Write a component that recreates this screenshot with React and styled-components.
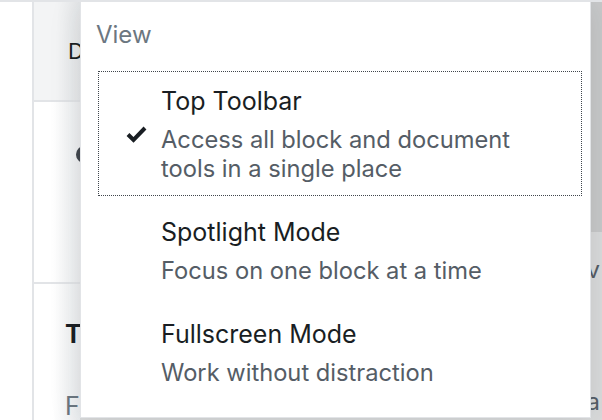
import React from "react";
import styled, { createGlobalStyle } from "styled-components";

const GlobalStyle = createGlobalStyle`
  html, body {
    margin: 0;
    padding: 0;
    background: #fff;
  }
  body {
    font-family: Inter, "Noto Sans", "Liberation Sans", sans-serif;
    -webkit-font-smoothing: antialiased;
  }
`;

const Screen = styled.div`
  position: relative;
  width: 602px;
  height: 420px;
  overflow: hidden;
  display: flex;
  box-sizing: border-box;
  border-top: 2px solid #e2e4e7;
`;

const Gutter = styled.div`
  width: 32px;
  flex-shrink: 0;
  border-right: 2px solid #e2e4e7;
`;

const Sidebar = styled.div`
  width: 46px;
  flex-shrink: 0;
  overflow: hidden;
  white-space: nowrap;
  display: flex;
  flex-direction: column;
  background: linear-gradient(90deg, #fff 40%, #eceef0 100%);
`;

const SidebarHeader = styled.div`
  height: 98px;
  display: flex;
  align-items: center;
  padding-left: 34px;
  background: linear-gradient(90deg, #f3f4f5 50%, #e6e8ea 100%);
  border-bottom: 2px solid #e2e4e7;
  font-size: 22px;
  color: #191e23;
`;

const SidebarBody = styled.div`
  height: 182px;
  display: flex;
  align-items: flex-start;
  padding: 44px 0 0 42px;
  box-sizing: border-box;
  border-bottom: 2px solid #e2e4e7;
`;

const Dot = styled.span`
  flex-shrink: 0;
  width: 17px;
  height: 17px;
  border-radius: 50%;
  background: #40464d;
`;

const SidebarSection = styled.div`
  flex: 1;
  display: flex;
  flex-direction: column;
  padding: 36px 0 0 31px;
  gap: 44px;
`;

const SectionTitle = styled.div`
  font-size: 25px;
  line-height: 28px;
  font-weight: 700;
  color: #191e23;
`;

const SectionText = styled.div`
  font-size: 25px;
  line-height: 28px;
  color: #6c7781;
`;

const Scrim = styled.div`
  flex: 1;
  display: flex;
  flex-direction: column;
  overflow: hidden;
`;

const ScrimTop = styled.div`
  height: 230px;
  background: #c8c9ca;
`;

const ScrimBottom = styled.div`
  flex: 1;
  background: #dadbdc;
  display: flex;
  flex-direction: column;
  align-items: flex-end;
  gap: 104px;
  padding: 24px 2px 0 0;
  color: #555d66;
  font-size: 24px;
  line-height: 28px;
`;

const Menu = styled.div`
  position: absolute;
  left: 80px;
  top: -2px;
  width: 511px;
  bottom: 2px;
  box-sizing: border-box;
  background: #fff;
  border: 1px solid #e2e4e7;
  border-top-width: 2px;
  box-shadow: 0 3px 30px rgba(25, 30, 35, 0.12);
  padding: 20px 8px 0 15px;
`;

const GroupLabel = styled.div`
  font-size: 24px;
  line-height: 26px;
  color: #6c7781;
  margin-bottom: 23px;
`;

const ItemList = styled.div`
  display: flex;
  flex-direction: column;
  gap: 6px;
  margin-left: 2px;
`;

const Item = styled.div`
  display: flex;
  align-items: center;
  gap: 13px;
  padding: 15px 40px 13px 26px;
  outline: ${(p) => (p.$focused ? "1px dotted #40464d" : "none")};
  outline-offset: -1px;
`;

const IconSlot = styled.span`
  width: 24px;
  height: 24px;
  flex-shrink: 0;
  display: flex;
  align-items: center;
  justify-content: center;
`;

const ItemText = styled.div`
  display: flex;
  flex-direction: column;
  gap: 9px;
`;

const ItemTitle = styled.div`
  font-size: 25px;
  line-height: 30px;
  color: #191e23;
`;

const ItemInfo = styled.div`
  font-size: 23.7px;
  line-height: 29px;
  color: #555d66;
`;

const Check = () => (
  <svg width="21" height="17" viewBox="0 0 21 17">
    <path d="M2 8.5l5.5 5.5L19 2" fill="none" stroke="#191e23" strokeWidth="4" />
  </svg>
);

const items = [
  {
    title: "Top Toolbar",
    info: "Access all block and document tools in a single place",
    checked: true,
  },
  { title: "Spotlight Mode", info: "Focus on one block at a time" },
  { title: "Fullscreen Mode", info: "Work without distraction" },
];

export default function App() {
  return (
    <>
      <GlobalStyle />
      <Screen>
        <Gutter />
        <Sidebar>
          <SidebarHeader>Document</SidebarHeader>
          <SidebarBody>
            <Dot />
          </SidebarBody>
          <SidebarSection>
            <SectionTitle>Template</SectionTitle>
            <SectionText>Full width</SectionText>
          </SidebarSection>
        </Sidebar>
        <Scrim>
          <ScrimTop />
          <ScrimBottom>
            <span>v</span>
            <span>a</span>
          </ScrimBottom>
        </Scrim>
        <Menu>
          <GroupLabel>View</GroupLabel>
          <ItemList>
            {items.map((it) => (
              <Item key={it.title} $focused={it.checked}>
                <IconSlot>{it.checked && <Check />}</IconSlot>
                <ItemText>
                  <ItemTitle>{it.title}</ItemTitle>
                  <ItemInfo>{it.info}</ItemInfo>
                </ItemText>
              </Item>
            ))}
          </ItemList>
        </Menu>
      </Screen>
    </>
  );
}
